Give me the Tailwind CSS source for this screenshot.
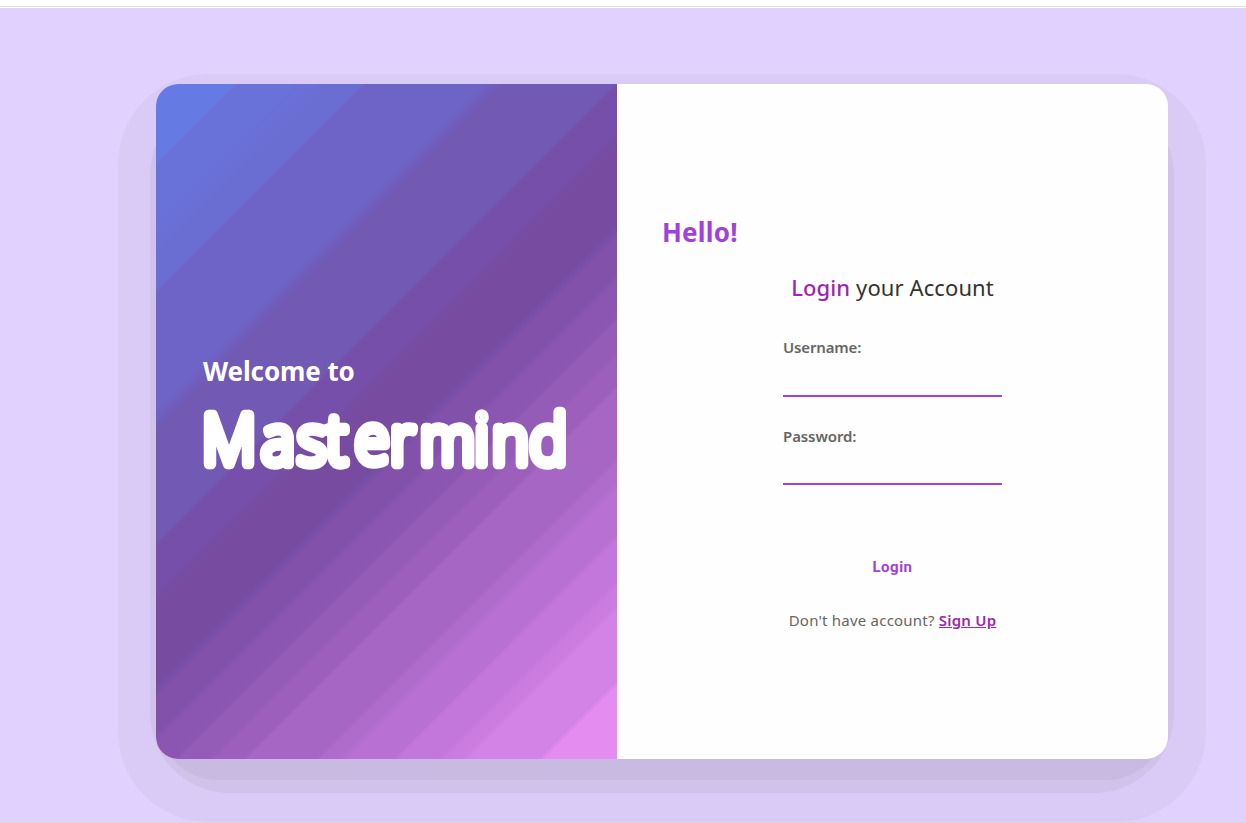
<!DOCTYPE html>
<html lang="en">
<head>
<meta charset="utf-8">
<title>Mastermind Login</title>
<script src="https://cdn.jsdelivr.net/npm/@tailwindcss/browser@4"></script>
</head>
<body class="h-[823px] overflow-hidden bg-[#fefefe] font-['Noto_Sans','Open_Sans',sans-serif]">
<div class="flex h-[823px] flex-col">
  <div class="h-[7px] shrink-0 border-b border-[#dedede]"></div>
  <main class="relative mt-px flex grow justify-center border-b border-[#d9d5e3] bg-[#e0d1ff] pt-[76px] pl-[78px]">
    <!-- stepped shadow layers -->
    <div class="absolute top-[66px] left-[118px] h-[748px] w-[1088px] rounded-[90px] bg-[#dacbf6]"></div>
    <div class="absolute top-[87px] left-[150px] h-[698px] w-[1024px] rounded-[80px] bg-[#d1c2ea]"></div>
    <div class="absolute top-[110px] left-[158px] h-[662px] w-[1008px] rounded-[60px] bg-[#c9bae2]"></div>
    <section class="relative flex h-[675px] w-[1012px] overflow-hidden rounded-[22px] bg-[#fefefe]">
      <div class="flex w-[461px] shrink-0 flex-col bg-[linear-gradient(135deg,#667ae4_6.8%,#6972d9_7.3%,#6972d9_12%,#6a6ed3_15%,#6a6ed3_18%,#6e64c7_18.5%,#6e64c7_28.5%,#7159b4_30.7%,#7159b4_40.3%,#754fa9_40.8%,#754fa9_44.5%,#774b9f_46.5%,#774b9f_52.8%,#744fa9_53.4%,#8251aa_54%,#8251aa_57.3%,#8b56b2_57.8%,#8b56b2_61%,#945bb7_61.5%,#945bb7_64%,#9c5fbc_64.7%,#9c5fbc_67%,#a666c4_67.5%,#a666c4_73.5%,#b06ccb_74%,#b06ccb_75.4%,#b870d2_76.4%,#b870d2_80.2%,#c377da_80.7%,#c377da_84.2%,#cb7cdf_85%,#cb7cdf_86.3%,#d383e6_87%,#d383e6_93.1%,#e48cf0_93.6%)] pt-[269px] pl-[47px] text-white">
        <h2 class="h-[36px] text-[26px] leading-[36px] font-bold tracking-[-0.1px] whitespace-nowrap">Welcome to</h2>
        <svg class="h-[100px] w-[380px] overflow-visible" viewBox="0 0 380 100" role="img">
          <text transform="scale(.9 1)" x="-0.9 65 105 137 169 208 241 302 321 363" y="75 75 75 75 74 75 75 75 75 75" font-family="'Open Sans', sans-serif" font-weight="300" font-size="69" fill="#fff" stroke="#fff" stroke-width="10.5" stroke-linejoin="round">Mastermind</text>
        </svg>
      </div>
      <div class="flex grow flex-col pt-[130px]">
        <h2 class="h-[36px] pl-[45px] text-[26px] leading-[36px] font-bold tracking-[0.2px] text-[#9e42db]">Hello!</h2>
        <form class="mx-auto flex w-[219px] flex-col">
          <h3 class="mt-[20px] text-center text-[22px] leading-[34px] tracking-[0.1px] whitespace-nowrap text-[#333]"><span class="font-medium text-[#9c27b0]">Login</span> your Account</h3>
          <label class="mt-[31px] h-[24px] text-[15px] leading-[24px] font-semibold tracking-[-0.15px] text-[#666]">Username:</label>
          <input class="h-[38px] border-b-2 border-[#9e42db] outline-none">
          <label class="mt-[27px] h-[24px] text-[15px] leading-[24px] font-semibold tracking-[-0.1px] text-[#666]">Password:</label>
          <input type="password" class="h-[37px] border-b-2 border-[#9e42db] outline-none">
          <button type="button" class="mt-[70px] h-[24px] text-center font-['Roboto',sans-serif] text-[15px] leading-[24px] font-bold tracking-[0.5px] text-[#9e42db]">Login</button>
          <p class="mt-[29px] -mx-2 text-center text-[15px] leading-[24px] tracking-[0.22px] whitespace-nowrap text-[#666]">Don't have account? <a class="font-semibold text-[#9c27b0] underline">Sign Up</a></p>
        </form>
      </div>
    </section>
  </main>
</div>
</body>
</html>
